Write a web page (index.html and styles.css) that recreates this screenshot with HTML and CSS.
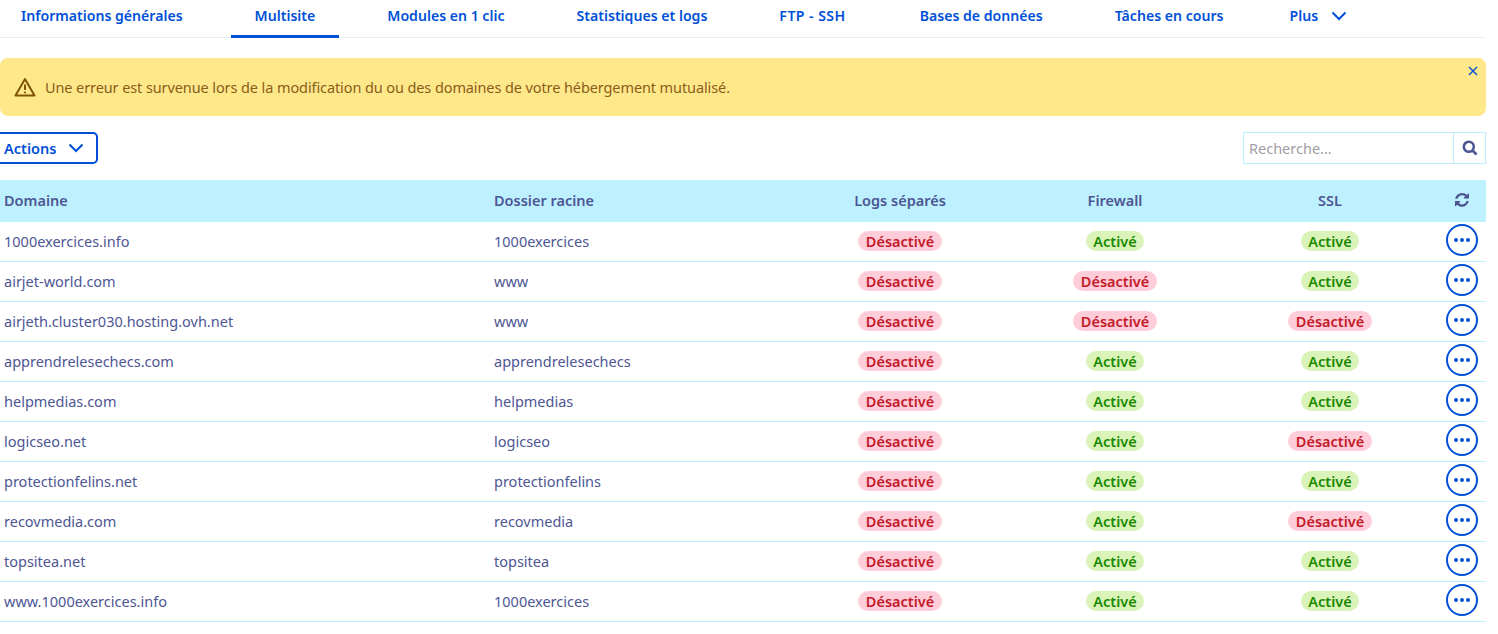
FILE: index.html
```html
<!DOCTYPE html>
<html lang="fr">
<head>
<meta charset="utf-8">
<title>Multisite</title>
<link rel="stylesheet" href="styles.css">
</head>
<body>
<div class="page">
  <nav class="tabs">
    <a class="tab">Informations générales</a>
    <a class="tab active">Multisite</a>
    <a class="tab">Modules en 1 clic</a>
    <a class="tab">Statistiques et logs</a>
    <a class="tab tab-ftp">FTP - SSH</a>
    <a class="tab">Bases de données</a>
    <a class="tab">Tâches en cours</a>
    <a class="tab tab-more">Plus <svg class="chev chev-plus" viewBox="0 0 16 10"><path d="M1.5 1.5 8 8l6.500-6.500"/></svg></a>
  </nav>
  <div class="banner">
    <svg class="warn" viewBox="0 0 22 20"><path class="warn-tri" d="M11 2 20.500 18.500H1.500Z"/><path class="warn-mark" d="M11 7.500v5.500M11 14.800v1.400"/></svg>
    <span>Une erreur est survenue lors de la modification du ou des domaines de votre hébergement mutualisé.</span>
    <svg class="close" viewBox="0 0 10 10"><path d="M1 1l8 8M9 1l-8 8"/></svg>
  </div>
  <div class="toolbar">
    <button class="actions">Actions <svg class="chev" viewBox="0 0 16 10"><path d="M1.500 1.500 8 8l6.500-6.500"/></svg></button>
    <div class="search">
      <span class="placeholder">Recherche...</span>
      <span class="search-btn"><svg viewBox="0 0 16 16"><circle cx="6.800" cy="6.800" r="5"/><path d="M10.500 10.500 14.500 14.500"/></svg></span>
    </div>
  </div>
  <table class="grid">
    <colgroup><col class="c-dom"><col class="c-dir"><col class="c-st"><col class="c-st"><col class="c-st"><col></colgroup>
    <thead>
      <tr>
        <th>Domaine</th><th>Dossier racine</th><th class="mid">Logs séparés</th><th class="mid">Firewall</th><th class="mid">SSL</th>
        <th class="mid"><svg class="refresh" viewBox="0 0 1536 1536"><path d="M1511 896q0 5-1 7-64 268-268 434.500T764 1504q-146 0-282.500-55T238 1292l-129 129q-19 19-45 19t-45-19-19-45V928q0-26 19-45t45-19h448q26 0 45 19t19 45-19 45l-137 137q71 66 161 102t187 36q134 0 250-65t186-179q11-17 53-117 8-23 30-23h192q13 0 22.500 9.500t9.500 22.500zm25-800v448q0 26-19 45t-45 19h-448q-26 0-45-19t-19-45 19-45l138-138Q969 256 768 256q-134 0-250 65T332 500q-11 17-53 117-8 23-30 23H50q-13 0-22.500-9.500T18 608v-7q65-268 270-434.500T768 0q146 0 284 55.500T1297 212l130-129q19-19 45-19t45 19 19 45z"/></svg></th>
      </tr>
    </thead>
    <tbody>
      <tr><td>1000exercices.info</td><td>1000exercices</td><td class="mid"><span class="pill off">Désactivé</span></td><td class="mid"><span class="pill on">Activé</span></td><td class="mid"><span class="pill on">Activé</span></td><td class="mid"><button class="more"><i></i><i></i><i></i></button></td></tr>
      <tr><td>airjet-world.com</td><td>www</td><td class="mid"><span class="pill off">Désactivé</span></td><td class="mid"><span class="pill off">Désactivé</span></td><td class="mid"><span class="pill on">Activé</span></td><td class="mid"><button class="more"><i></i><i></i><i></i></button></td></tr>
      <tr><td>airjeth.cluster030.hosting.ovh.net</td><td>www</td><td class="mid"><span class="pill off">Désactivé</span></td><td class="mid"><span class="pill off">Désactivé</span></td><td class="mid"><span class="pill off">Désactivé</span></td><td class="mid"><button class="more"><i></i><i></i><i></i></button></td></tr>
      <tr><td>apprendrelesechecs.com</td><td>apprendrelesechecs</td><td class="mid"><span class="pill off">Désactivé</span></td><td class="mid"><span class="pill on">Activé</span></td><td class="mid"><span class="pill on">Activé</span></td><td class="mid"><button class="more"><i></i><i></i><i></i></button></td></tr>
      <tr><td>helpmedias.com</td><td>helpmedias</td><td class="mid"><span class="pill off">Désactivé</span></td><td class="mid"><span class="pill on">Activé</span></td><td class="mid"><span class="pill on">Activé</span></td><td class="mid"><button class="more"><i></i><i></i><i></i></button></td></tr>
      <tr><td>logicseo.net</td><td>logicseo</td><td class="mid"><span class="pill off">Désactivé</span></td><td class="mid"><span class="pill on">Activé</span></td><td class="mid"><span class="pill off">Désactivé</span></td><td class="mid"><button class="more"><i></i><i></i><i></i></button></td></tr>
      <tr><td>protectionfelins.net</td><td>protectionfelins</td><td class="mid"><span class="pill off">Désactivé</span></td><td class="mid"><span class="pill on">Activé</span></td><td class="mid"><span class="pill on">Activé</span></td><td class="mid"><button class="more"><i></i><i></i><i></i></button></td></tr>
      <tr><td>recovmedia.com</td><td>recovmedia</td><td class="mid"><span class="pill off">Désactivé</span></td><td class="mid"><span class="pill on">Activé</span></td><td class="mid"><span class="pill off">Désactivé</span></td><td class="mid"><button class="more"><i></i><i></i><i></i></button></td></tr>
      <tr><td>topsitea.net</td><td>topsitea</td><td class="mid"><span class="pill off">Désactivé</span></td><td class="mid"><span class="pill on">Activé</span></td><td class="mid"><span class="pill on">Activé</span></td><td class="mid"><button class="more"><i></i><i></i><i></i></button></td></tr>
      <tr><td>www.1000exercices.info</td><td>1000exercices</td><td class="mid"><span class="pill off">Désactivé</span></td><td class="mid"><span class="pill on">Activé</span></td><td class="mid"><span class="pill on">Activé</span></td><td class="mid"><button class="more"><i></i><i></i><i></i></button></td></tr>
    </tbody>
  </table>
</div>
</body>
</html>
```
FILE: styles.css
```css
* { box-sizing: border-box; }
html, body { margin: 0; height: 100%; overflow: hidden; background: #fff; }
body { font-family: "Noto Sans", "Open Sans", sans-serif; font-size: 14.500px; color: #4d5693; }
.page { width: 1486px; }

.tabs { display: flex; gap: 24px; height: 38px; margin-left: -3px; width: 1489px; border-bottom: 1px solid #e6f0f8; }
.tab { display: flex; align-items: center; height: 38px; padding: 0 24px 4px; font-weight: 600; font-size: 14.100px; color: #0050d7; white-space: nowrap; border-bottom: 3px solid transparent; }
.tab.active { border-bottom-color: #0050d7; }
.tab-ftp { letter-spacing: 0.450px; margin-right: 2px; }
.tab-more { margin-left: -6px; }
.chev { width: 16px; height: 10px; fill: none; stroke: #0050d7; stroke-width: 2; }
.chev-plus { margin-left: 13px; }

.banner { display: flex; align-items: center; position: relative; height: 58px; margin-top: 20px; padding-left: 14px; gap: 9px; background: #ffe88a; border-radius: 8px; color: #8a5d18; letter-spacing: -0.1px; }
.warn { width: 22px; height: 20px; fill: none; stroke: #7f5406; stroke-width: 2; stroke-linejoin: round; }
.close { position: absolute; top: 8px; right: 8px; width: 10px; height: 10px; fill: none; stroke: #0050d7; stroke-width: 1.400; }

.toolbar { display: flex; justify-content: space-between; margin-top: 16px; height: 32px; }
.actions { display: flex; align-items: center; gap: 12px; height: 32px; width: 102px; margin-left: -4px; padding: 0 0 0 6px; border: 2px solid #0050d7; border-radius: 5px; background: #fff; font: 600 14.500px "Noto Sans", sans-serif; color: #0050d7; }
.search { display: flex; width: 243px; height: 32px; border: 1px solid #bef1ff; }
.placeholder { flex: 1; padding-left: 5px; line-height: 31px; color: #a0a0a6; }
.search-btn { display: flex; align-items: center; justify-content: center; width: 32px; border-left: 1px solid #bef1ff; }
.search-btn svg { width: 16px; height: 16px; fill: none; stroke: #4d5693; stroke-width: 2.600; }

.grid { width: 1486px; margin-top: 16px; table-layout: fixed; border-collapse: separate; border-spacing: 0; }
.c-dom { width: 490px; }
.c-dir { width: 302.500px; }
.c-st { width: 215px; }
.grid th { height: 42px; padding: 0 4px 3px; background: #bef1ff; color: #4d5693; font-weight: 600; text-align: left; }
.grid td { height: 40px; padding: 0 4px 1px; border-bottom: 1px solid #bef1ff; white-space: nowrap; }
.grid th.mid, .grid td.mid { text-align: center; }
.refresh { display: block; width: 14px; height: 14px; margin: 0 auto; fill: #4d5693; }
.pill { display: inline-block; height: 20px; padding: 0 7.500px; line-height: 20px; border-radius: 10px; font-weight: 600; }
.pill.on { background: #daf3b9; color: #1a8a00; }
.pill.off { background: #ffccd9; color: #c41a2a; }
.more { display: inline-flex; align-items: center; justify-content: center; gap: 2px; width: 32px; height: 32px; margin-bottom: 2px; padding: 0; vertical-align: middle; border: 2px solid #0050d7; border-radius: 50%; background: #fff; }
.more i { width: 4px; height: 4px; border-radius: 50%; background: #0050d7; }
```
